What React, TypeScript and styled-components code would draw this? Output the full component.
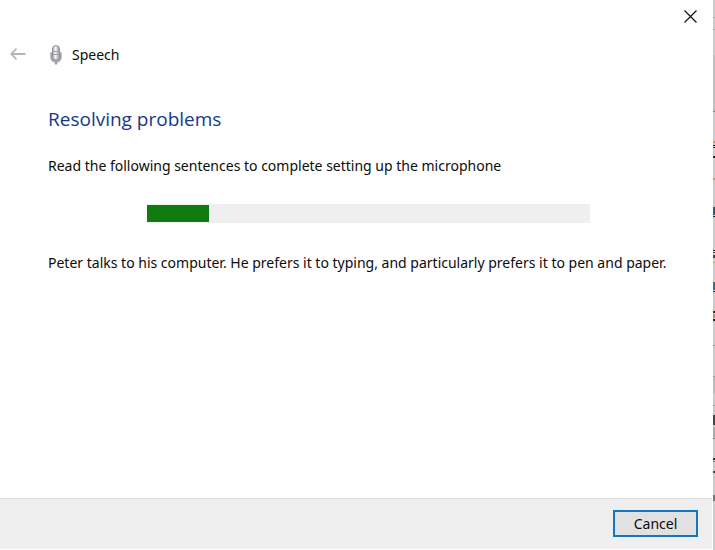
import React, { useId } from "react";
import styled, { createGlobalStyle } from "styled-components";

const GlobalStyle = createGlobalStyle`
  * { box-sizing: border-box; }
  body {
    margin: 0;
    background: #fff;
    color: #0c0c0c;
    font-family: "Noto Sans", "Open Sans", sans-serif;
    font-size: 14px;
    line-height: 20px;
  }
`;

const Desktop = styled.div`
  display: grid;
  grid-template-columns: 1fr 2px;
  min-height: 100vh;
`;

const Dialog = styled.main`
  display: flex;
  flex-direction: column;
  padding: 0 1px 1px 0;
  background: #fff;
`;

const TitleBar = styled.div`
  display: flex;
  justify-content: flex-end;
  height: 32px;
  padding-right: 6px;
`;

const IconButton = styled.button<{ $width: number }>`
  display: flex;
  align-items: center;
  justify-content: center;
  width: ${(p) => p.$width}px;
  height: 32px;
  padding: 0;
  border: 0;
  background: transparent;
`;

const Header = styled.header`
  display: flex;
  align-items: center;
  height: 45px;
  padding-left: 8px;
`;

const AppName = styled.div`
  display: flex;
  align-items: center;
  gap: 8px;
  margin-left: 20px;
`;

const Content = styled.section`
  flex: 1;
  padding: 28px 40px 24px 48px;
`;

const Heading = styled.h1`
  margin: 0 0 23px;
  color: #14388c;
  font-family: "Open Sans", "Noto Sans", sans-serif;
  font-size: 19px;
  font-weight: 400;
  line-height: 28px;
`;

const Paragraph = styled.p`
  margin: 0;
`;

const Track = styled.div`
  height: 19px;
  margin: 28px 82px 30px 99px;
  padding: 1px 0;
  background: #efefef;
`;

const Fill = styled.div`
  height: 100%;
  background: #107c10;
`;

const Footer = styled.footer`
  display: flex;
  align-items: flex-start;
  justify-content: flex-end;
  height: 51px;
  padding: 11px 14px 0 0;
  border-top: 1px solid #dfdfdf;
  background: #efefef;
`;

const CancelButton = styled.button`
  width: 85px;
  height: 27px;
  padding: 0;
  border: 2px solid #1477c4;
  background: #e1e1e1;
  color: inherit;
  font: inherit;
`;

const Backdrop = styled.aside`
  overflow: hidden;
  background: #cbcbcb;
`;

const Marks = styled.svg`
  display: block;
`;

const marks: [number, number, string][] = [
  [17, 1, "#aaa"], [29, 1, "#aaa"], [55, 56, "#c0c0c0"], [111, 1, "#888"],
  [141, 2, "#c49a62"], [145, 1, "#222"], [147, 1, "#333"], [156, 2, "#222"],
  [178, 2, "#c49a62"], [207, 8, "#235d80"], [216, 1, "#222"],
  [250, 1, "#222"], [252, 1, "#444"], [255, 3, "#444"], [262, 1, "#bca27a"],
  [282, 8, "#397285"], [291, 1, "#222"], [311, 2, "#333"], [314, 4, "#b88d68"],
  [319, 2, "#222"], [345, 1, "#999"], [376, 1, "#999"], [377, 17, "#bcbcbc"],
  [405, 1, "#999"], [415, 10, "#444"], [427, 11, "#aaa"], [438, 1, "#888"],
  [458, 2, "#333"], [461, 1, "#777"], [471, 2, "#444"], [495, 6, "#777"],
];

function Microphone() {
  const id = useId();
  return (
    <svg width="16" height="20" viewBox="0 0 16 20" aria-hidden="true">
      <defs>
        <linearGradient id={id}>
          <stop offset="0" stopColor="#a0a0a5" />
          <stop offset="0.4" stopColor="#f7f7fa" />
          <stop offset="1" stopColor="#94959b" />
        </linearGradient>
      </defs>
      <path d="M3.2 7.5v4.5c0 3 2 4.4 4.8 4.4s4.8-1.4 4.8-4.4V7.5" fill="#c4c5c9" stroke="#a0a1a7" strokeWidth="1.8" />
      <rect x="4.5" y="0.5" width="7" height="14.5" rx="3.5" fill={`url(#${id})`} stroke="#909196" />
      <path d="M5 6.5h6M5 9.5h6" stroke="#a2a3a9" />
      <path d="M6 16h4l-1 3.6H7z" fill="#a2a3a8" />
    </svg>
  );
}

export default function App() {
  return (
    <>
      <GlobalStyle />
      <Desktop>
        <Dialog aria-labelledby="page-heading">
          <TitleBar>
            <IconButton $width={32} type="button" aria-label="Close">
              <svg width="13" height="13" viewBox="0 0 13 13" fill="none" stroke="#111" strokeWidth="1.2">
                <path d="M.5.5l12 12M12.5.5l-12 12" />
              </svg>
            </IconButton>
          </TitleBar>
          <Header>
            <IconButton $width={20} type="button" aria-label="Back" disabled>
              <svg width="16" height="14" viewBox="0 0 16 14" fill="none" stroke="#b5b5b5" strokeWidth="1.8">
                <path d="M15.5 6H1M6.5.7L1.2 6l5.3 5.3" />
              </svg>
            </IconButton>
            <AppName>
              <Microphone />
              <span>Speech</span>
            </AppName>
          </Header>
          <Content>
            <Heading id="page-heading">Resolving problems</Heading>
            <Paragraph>Read the following sentences to complete setting up the microphone</Paragraph>
            <Track role="progressbar" aria-label="Setup progress" aria-valuemin={0} aria-valuemax={100} aria-valuenow={14}>
              <Fill style={{ width: "14%" }} />
            </Track>
            <Paragraph>Peter talks to his computer. He prefers it to typing, and particularly prefers it to pen and paper.</Paragraph>
          </Content>
          <Footer>
            <CancelButton type="button">Cancel</CancelButton>
          </Footer>
        </Dialog>
        <Backdrop aria-hidden="true">
          <Marks width="2" height="550" viewBox="0 0 2 550">
            {marks.map(([y, height, fill]) => (
              <rect key={y} y={y} width="2" height={height} fill={fill} />
            ))}
          </Marks>
        </Backdrop>
      </Desktop>
    </>
  );
}
